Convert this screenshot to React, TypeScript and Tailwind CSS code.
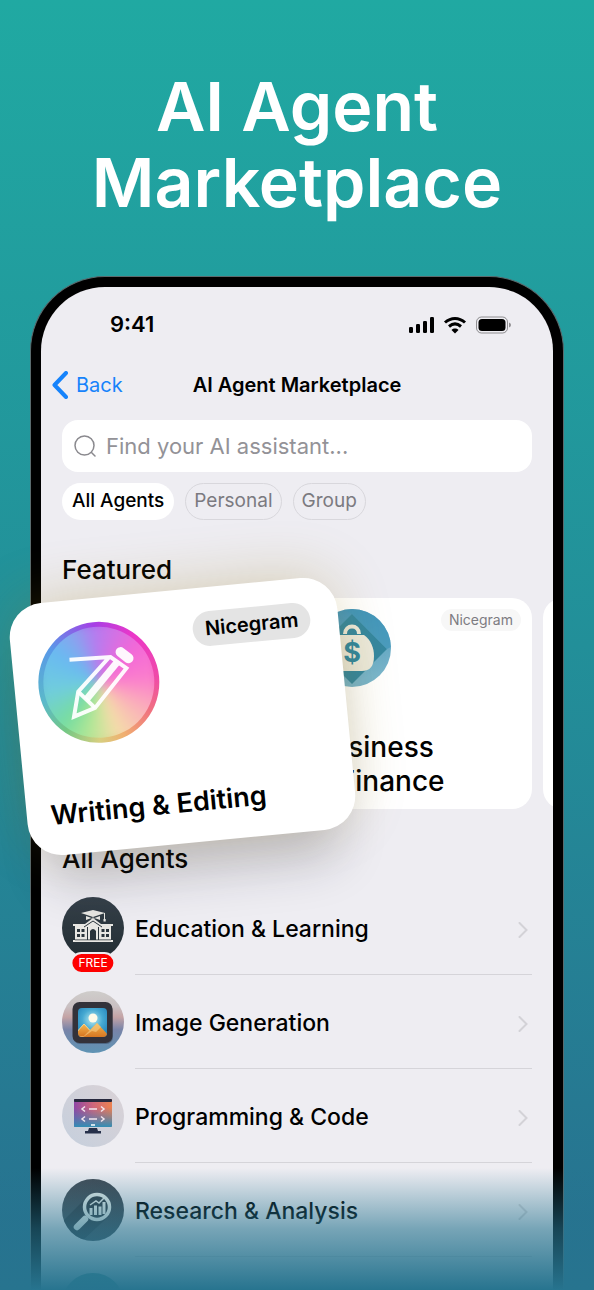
import type { ReactNode } from "react";

const chips = ["All Agents", "Personal", "Group"];

function StatusIcons() {
  return (
    <svg viewBox="0 0 104 20" className="h-5 w-[104px]" aria-hidden="true">
      <rect x="1" y="12" width="4" height="6" rx="1.2" />
      <rect x="8" y="9" width="4" height="9" rx="1.2" />
      <rect x="15" y="6" width="4" height="12" rx="1.2" />
      <rect x="22" y="2" width="4" height="16" rx="1.2" />
      <g fill="none" stroke="#000" strokeWidth="3">
        <path d="M37 7.500C43 2 51 2 57 7.500" />
        <path d="M41 11.500C45 8 49 8 53 11.500" />
      </g>
      <path d="M47 18.500L43.500 14.900C45.500 13 48.500 13 50.500 14.900Z" />
      <rect
        x="68.500"
        y="2"
        width="31"
        height="16"
        rx="5"
        fill="none"
        stroke="#000"
        strokeOpacity=".4"
      />
      <rect x="70.500" y="4" width="27" height="12" rx="3.500" />
      <path d="M101 7.500Q103 8.200 103 10T101 12.500Z" fillOpacity=".4" />
    </svg>
  );
}

function PencilIcon() {
  return (
    <svg viewBox="0 0 121 121" className="h-full w-full" aria-hidden="true">
      <g
        transform="rotate(6 60 60)"
        fill="none"
        stroke="#fff"
        strokeOpacity=".94"
        strokeWidth="4"
        strokeLinejoin="miter"
      >
        <path d="M31 38L72 35L88 46L57 86L36 95L40 70L70 36" />
        <path d="M40 70L57 86" />
        <path d="M78 41L48 78" strokeWidth="7" />
        <path d="M82 30L90 36" strokeWidth="10" strokeLinecap="round" />
      </g>
    </svg>
  );
}

function BusinessIcon() {
  return (
    <svg viewBox="0 0 78 78" className="h-[78px] w-[78px]" aria-hidden="true">
      <defs>
        <linearGradient id="biz" x1="0" y1="0" x2="0.3" y2="1">
          <stop offset="0" stopColor="#3d8fb6" />
          <stop offset="1" stopColor="#78b5cc" />
        </linearGradient>
        <clipPath id="bizClip">
          <circle cx="39" cy="39" r="39" />
        </clipPath>
      </defs>
      <g clipPath="url(#bizClip)">
        <rect width="78" height="78" fill="url(#biz)" />
        <path d="M39 5L74 40L39 75L4 40Z" fill="#3487a0" />
        <path d="M74 40L39 5L30 0H78V38Z" fill="#3f96bb" fillOpacity=".7" />
      </g>
      <path
        d="M32 25C32 15 46 15 46 25"
        fill="none"
        stroke="#ebe9dc"
        strokeWidth="4"
      />
      <path
        d="M25 26H51C58 31 61 39 61 47C61 57 57 62 49 62H29C21 62 17 57 17 47C17 39 19 31 25 26Z"
        fill="#ebe9dc"
      />
      <text
        x="39"
        y="53"
        textAnchor="middle"
        fontFamily="Inter"
        fontWeight="700"
        fontSize="27"
        fill="#2f87a0"
      >
        $
      </text>
    </svg>
  );
}

function EducationIcon() {
  return (
    <svg viewBox="0 0 62 62" className="h-[62px] w-[62px]" aria-hidden="true">
      <defs>
        <linearGradient id="edu" x1="0" y1="0" x2="0" y2="1">
          <stop offset="0" stopColor="#36414a" />
          <stop offset="1" stopColor="#222d33" />
        </linearGradient>
      </defs>
      <circle cx="31" cy="31" r="31" fill="url(#edu)" />
      <g fill="#e8e7e3">
        <path d="M31 13L43 16L31 20L19 16Z" />
        <path d="M24 19L31 21.500L38 19V23L31 20.500L24 23Z" />
        <path d="M42 16h1v7h-1zM41.500 22h2.200v2.500h-2.200z" />
        <path d="M11 27H23L31 21L39 27H51V29H49V43H51V45H11V43H13V29H11Z" />
      </g>
      <path d="M22 30L31 24L40 30" fill="none" stroke="#2a343b" />
      <g fill="#2a343b">
        <path d="M15 32h3v3h-3zM19.500 32h3v3h-3zM15 37h3v3h-3zM19.500 37h3v3h-3z" />
        <path d="M39.500 32h3v3h-3zM44 32h3v3h-3zM39.500 37h3v3h-3zM44 37h3v3h-3z" />
        <path d="M25 30h1v13h-1zM36 30h1v13h-1z" />
        <path d="M28 43V34Q31 30 34 34V43Z" />
        <path d="M13 42.500H49V43.200H13Z" />
      </g>
    </svg>
  );
}

function ImageIcon() {
  return (
    <svg viewBox="0 0 62 62" className="h-[62px] w-[62px]" aria-hidden="true">
      <defs>
        <linearGradient id="img" x1="0" y1="0" x2="0" y2="1">
          <stop offset="0" stopColor="#cfcdcb" />
          <stop offset=".25" stopColor="#c9c0c2" />
          <stop offset=".42" stopColor="#c4a3a5" />
          <stop offset=".62" stopColor="#7984a8" />
          <stop offset="1" stopColor="#5e93b4" />
        </linearGradient>
        <radialGradient id="sky" cx=".5" cy=".4" r=".7">
          <stop offset="0" stopColor="#b7eaf0" />
          <stop offset=".5" stopColor="#46a9d2" />
          <stop offset="1" stopColor="#1f7fb8" />
        </radialGradient>
        <linearGradient id="hill" x1="0" y1="0" x2="0" y2="1">
          <stop offset="0" stopColor="#f3b54e" />
          <stop offset="1" stopColor="#d4731f" />
        </linearGradient>
        <clipPath id="photo">
          <rect x="16" y="17" width="29" height="29" rx="4" />
        </clipPath>
      </defs>
      <circle cx="31" cy="31" r="31" fill="url(#img)" />
      <rect x="11" y="13" width="40" height="40" rx="7" fill="#1d2435" fillOpacity=".35" />
      <rect x="10.500" y="11" width="40" height="41" rx="7" fill="#33323a" />
      <g clipPath="url(#photo)">
        <rect x="16" y="17" width="29" height="29" fill="url(#sky)" />
        <circle cx="31" cy="27" r="4.500" fill="#fffbe9" />
        <path d="M13 43L22 33L34 46H13Z" fill="url(#hill)" stroke="#f8d68c" />
        <path d="M20 47L35 32L49 47Z" fill="url(#hill)" />
        <path d="M20 47L35 32L39 36L34 41L30 40Z" fill="#f7cf87" fillOpacity=".6" />
      </g>
    </svg>
  );
}

function CodeIcon() {
  return (
    <svg viewBox="0 0 62 62" className="h-[62px] w-[62px]" aria-hidden="true">
      <defs>
        <linearGradient id="codeBg" x1="1" y1="0" x2="0" y2="1">
          <stop offset="0" stopColor="#dad2d6" />
          <stop offset="1" stopColor="#c5cfdd" />
        </linearGradient>
        <linearGradient id="screen" x1="0" y1="0" x2="1" y2="0">
          <stop offset="0" stopColor="#8f46a5" />
          <stop offset=".5" stopColor="#cf667c" />
          <stop offset="1" stopColor="#ec8250" />
        </linearGradient>
        <linearGradient id="screenLow" x1="0" y1="0" x2="0" y2="1">
          <stop offset=".3" stopColor="#4b78b5" stopOpacity="0" />
          <stop offset="1" stopColor="#318eb5" />
        </linearGradient>
      </defs>
      <circle cx="31" cy="31" r="31" fill="url(#codeBg)" />
      <rect x="12" y="14" width="38" height="28" rx="1" fill="url(#screen)" />
      <rect x="12" y="14" width="38" height="28" rx="1" fill="url(#screenLow)" />
      <rect x="12" y="14" width="38" height="3" rx="1" fill="#27283d" />
      <path
        d="M23 21.500L20 24L23 26.500M39 21.500L42 24L39 26.500M23 31.500L20 34L23 36.500M39 31.500L42 34L39 36.500M27 24H35M27 34H35"
        fill="none"
        stroke="#f3e5ed"
        strokeWidth="1.500"
      />
      <path d="M29 40h4" stroke="#fff" strokeWidth="1.500" />
      <path d="M27 43H35L36 46H39V48.500H23V46H26Z" fill="#26304a" />
    </svg>
  );
}

function ResearchIcon() {
  return (
    <svg viewBox="0 0 62 62" className="h-[62px] w-[62px]" aria-hidden="true">
      <defs>
        <linearGradient id="res" x1="1" y1="0" x2="0" y2="1">
          <stop offset="0" stopColor="#3f4852" />
          <stop offset="1" stopColor="#49525b" />
        </linearGradient>
        <clipPath id="resClip">
          <circle cx="31" cy="31" r="31" />
        </clipPath>
      </defs>
      <g clipPath="url(#resClip)">
        <rect width="62" height="62" fill="url(#res)" />
        <path d="M24 19L0 43V62H20L47 37Z" fill="#262c34" fillOpacity=".5" />
      </g>
      <path d="M23 40L15 48" stroke="#e9eeeb" strokeWidth="6.500" strokeLinecap="round" />
      <circle cx="35" cy="28" r="12.500" fill="#333d45" stroke="#e9eeeb" strokeWidth="3.500" />
      <path
        d="M29 36V29M33.500 36V26.500M38 36V27.500M42 35V23"
        stroke="#e9eeeb"
        strokeWidth="3"
      />
      <path d="M28 26L34 22L37 24L42 19" fill="none" stroke="#e9eeeb" strokeWidth="1.500" />
    </svg>
  );
}

function LanguageIcon() {
  return (
    <svg viewBox="0 0 62 62" className="h-[62px] w-[62px]" aria-hidden="true">
      <circle cx="31" cy="31" r="31" fill="#3d8d92" />
      <circle cx="31" cy="33" r="16" fill="none" stroke="#e9eeeb" strokeWidth="2" />
      <path
        d="M15 33H47M31 17C22 26 22 40 31 49C40 40 40 26 31 17"
        fill="none"
        stroke="#e9eeeb"
        strokeWidth="2"
      />
    </svg>
  );
}

type Agent = { name: string; icon: ReactNode; free?: boolean };

const agents: Agent[] = [
  { name: "Education & Learning", icon: <EducationIcon />, free: true },
  { name: "Image Generation", icon: <ImageIcon /> },
  { name: "Programming & Code", icon: <CodeIcon /> },
  { name: "Research & Analysis", icon: <ResearchIcon /> },
  { name: "Multilingual & Translation", icon: <LanguageIcon /> },
];

function AgentRow({ name, icon, free }: Agent) {
  return (
    <li>
      <a href="#" className="flex h-[94px] items-center gap-[11px]">
        <span className="relative shrink-0">
          {icon}
          {free && (
            <span className="absolute -bottom-[15px] left-1/2 -translate-x-1/2 rounded-full border-2 border-[#eeedf2] bg-[#fe0000] px-1.5 text-xs leading-[18px] text-white">
              FREE
            </span>
          )}
        </span>
        <span className="flex h-full flex-1 items-center justify-between border-b border-[#d5d4d9] pt-1 text-[23px] font-medium whitespace-nowrap">
          {name}
          <svg viewBox="0 0 10 16" className="mr-1 h-4 w-2.5" aria-hidden="true">
            <path
              d="M1.500 1L8.500 8L1.500 15"
              fill="none"
              stroke="#d3d2d7"
              strokeWidth="2"
              strokeLinecap="round"
            />
          </svg>
        </span>
      </a>
    </li>
  );
}

function FloatingCard() {
  return (
    <article className="absolute -top-2 -left-11 z-10 flex h-[253px] w-[329px] -rotate-[5.5deg] flex-col justify-between rounded-[34px] bg-white p-6 pr-7 shadow-[0_-6px_60px_-8px_rgba(150,120,20,0.32),0_50px_50px_-20px_rgba(30,30,50,0.2)]">
      <div className="flex items-start justify-between">
        <div className="h-[121px] w-[121px] rounded-full bg-[conic-gradient(from_0deg,#a63fe6,#ea36c9_40deg,#ef4aa8_90deg,#f0727f_125deg,#f0b070_160deg,#d7cf80_185deg,#74c884_220deg,#5bb9c9_255deg,#5999e8_310deg,#a63fe6)] p-[5px]">
          <div className="relative h-full w-full overflow-hidden rounded-full">
            <div className="absolute -inset-[5px] bg-[conic-gradient(from_0deg,#b47cf0,#f267d8_50deg,#fb7dcd_90deg,#fba8bd_120deg,#f5dda9_165deg,#b4e795_195deg,#77dda0_225deg,#70cddd_265deg,#69baf1_310deg,#86a6ee_335deg,#b47cf0)] blur-[6px]" />
            <div className="absolute -inset-[5px]">
              <PencilIcon />
            </div>
          </div>
        </div>
        <span className="rounded-full bg-[#e4e4e4] px-3 text-xl leading-[35px] font-semibold">
          Nicegram
        </span>
      </div>
      <h3 className="text-[27px] leading-8 font-semibold whitespace-nowrap">
        Writing &amp; Editing
      </h3>
    </article>
  );
}

export default function App() {
  return (
    <main className="relative h-screen overflow-hidden bg-linear-to-b from-[#20a9a2] via-[#228f99] to-[#27708f] font-['Inter',sans-serif] text-black">
      <h1 className="pt-[68px] text-center text-[68px] leading-[76px] font-semibold text-white">
        AI Agent
        <br />
        Marketplace
      </h1>

      <div className="mx-[30px] mt-14 rounded-t-[75px] border border-b-0 border-[#5b6b6e] bg-black p-2.5 pb-0">
        <div className="rounded-t-[64px] bg-[#eeedf2] px-[21px]">
          <div className="flex h-[75px] items-center justify-between pr-5 pl-12">
            <span className="text-[22px] font-semibold">9:41</span>
            <StatusIcons />
          </div>

          <header className="relative flex h-[46px] items-center justify-center">
            <button className="absolute -left-2.5 flex items-center gap-2 text-xl text-[#1683fb]">
              <svg viewBox="0 0 16 28" className="h-7 w-4" aria-hidden="true">
                <path
                  d="M14 2L2.500 14L14 26"
                  fill="none"
                  stroke="#1683fb"
                  strokeWidth="4"
                  strokeLinecap="round"
                  strokeLinejoin="round"
                />
              </svg>
              Back
            </button>
            <h2 className="text-xl font-semibold">AI Agent Marketplace</h2>
          </header>

          <label className="mt-3 flex h-[52px] items-center gap-2.5 rounded-2xl bg-white px-3">
            <svg viewBox="0 0 22 22" className="h-[22px] w-[22px]" aria-hidden="true">
              <g fill="none" stroke="#8a898e" strokeWidth="1.500" strokeLinecap="round">
                <circle cx="10.500" cy="10.500" r="9.500" />
                <path d="M17.500 17.500L21 21" />
              </g>
            </svg>
            <input
              type="text"
              aria-label="Find your AI assistant"
              placeholder="Find your AI assistant..."
              className="min-w-0 flex-1 bg-transparent text-[22px] outline-none placeholder:text-[#939297]"
            />
          </label>

          <div className="mt-[11px] flex gap-[11px] text-[19px]">
            {chips.map((chip, i) => (
              <button
                key={chip}
                className={
                  i === 0
                    ? "h-[37px] rounded-full bg-white px-2.5 font-medium"
                    : "h-[37px] rounded-full border border-[#d8d7dc] px-2 text-[#7b7a80]"
                }
              >
                {chip}
              </button>
            ))}
          </div>

          <h2 className="mt-[30px] text-[26px] leading-10 font-medium">Featured</h2>
          <div className="relative mt-2">
            <div className="-mr-[21px] flex gap-[11px] overflow-hidden pl-60">
              <article className="flex h-[211px] w-[230px] shrink-0 flex-col justify-between rounded-[20px] bg-white p-[11px]">
                <div className="flex items-start justify-between">
                  <BusinessIcon />
                  <span className="rounded-full bg-[#f7f7f7] px-2 text-sm leading-[22px] text-[#7d7c82]">
                    Nicegram
                  </span>
                </div>
                <h3 className="text-[28px] leading-[34px] font-medium">
                  Business
                  <br />
                  &amp; Finance
                </h3>
              </article>
              <div className="h-[211px] w-[230px] shrink-0 rounded-[20px] bg-white" />
            </div>
            <FloatingCard />
          </div>

          <h2 className="mt-[30px] text-[26px] leading-10 font-medium">All Agents</h2>
          <ul className="mt-0.5">
            {agents.map((agent) => (
              <AgentRow key={agent.name} {...agent} />
            ))}
          </ul>
        </div>
      </div>

      {/* bottom fade */}
      <div className="pointer-events-none absolute inset-x-0 bottom-0 h-[122px] bg-linear-to-b from-[#27748f]/0 via-[#27748f]/60 to-[#27748f]" />
    </main>
  );
}
